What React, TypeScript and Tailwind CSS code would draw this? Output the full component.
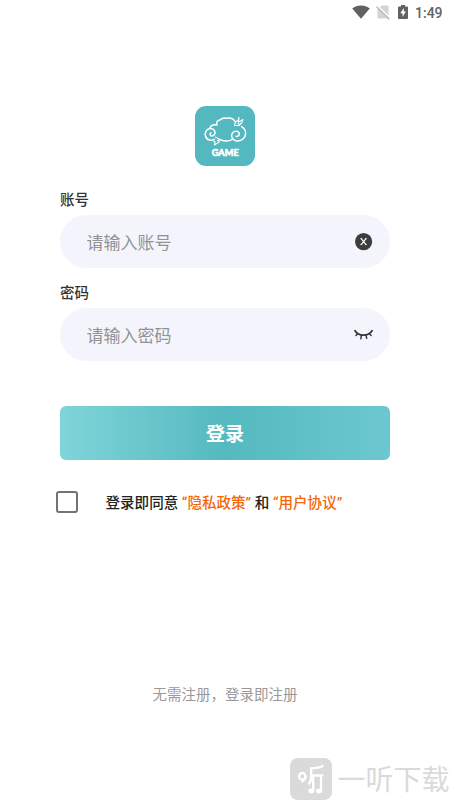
import React, { useState } from 'react';

function StatusBar() {
  return (
    <div className="flex h-6 shrink-0 items-center justify-end pr-2 text-[#616161]">
      <svg className="h-[14px] w-[18px]" viewBox="0 0 18 14" fill="currentColor">
        <path d="M0.2 3.4C2.6 1.5 5.6 0.5 9 0.5s6.400 1 8.800 2.900L9 13.700z" />
      </svg>
      <svg className="ml-[5px] h-4 w-4" viewBox="0 0 16 16">
        <path d="M6.500 1.500H12.500a1 1 0 0 1 1 1V14.500H2.500V5.500z" fill="#d3d3d3" />
        <path d="M1.800 2L15 15" stroke="#fff" strokeWidth="2.600" />
        <path d="M1.500 2.600L14.300 15.300" stroke="#aaa" strokeWidth="1.200" />
      </svg>
      <svg className="ml-[7px] h-4 w-[10px]" viewBox="0 0 10 16">
        <path d="M3 1h4v1.500h2q1 0 1 1V14q0 1-1 1H1q-1 0-1-1V3.500q0-1 1-1h2z" fill="currentColor" />
        <path d="M5.800 4L2.300 9.300h2.200v3.700L7.900 7.600H5.800z" fill="#fff" />
      </svg>
      <span className="ml-[7px] mt-px w-[27px] whitespace-nowrap font-[Roboto,sans-serif] text-[14px] font-medium leading-6">1:49</span>
    </div>
  );
}

function Logo() {
  return (
    <svg className="h-[60px] w-[60px]" viewBox="0 0 60 60">
      <rect width="60" height="60" rx="11" fill="#54b8c0" />
      <g fill="none" stroke="#fff" strokeWidth="1.500" strokeLinecap="round" strokeLinejoin="round">
        <path d="M16 27c-1.500 0.200-1.200 3 0.800 2.900 3-0.200 4.200-3.200 2.400-5.600-2-2.500-6-2.300-8 0.600-2.300 3.600-0.500 8.600 3.800 9.300 1.800 0.300 3.300-0.200 4.500-1" />
        <path d="M14.800 22.500c0.600-3 3.500-4.500 7.200-3.500-1.300-2.200 0.500-5 3-5 1.500-1.600 4.500-2.300 7-1.800 3.500-0.600 6.500 0.700 8 3.300" />
        <path d="M46.500 20.500c3.500 2 5 6 3.500 9.800-1.400 3.500-5.500 5.200-9.300 4.400-3.700-0.900-5.200-4.900-3.200-7.800 2-2.600 6.300-2.200 6.800 0.800 0.300 2-1.800 3.200-3.300 2.500" />
        <path d="M25.500 33.800c4.500 1.800 9 1.500 12.300-0.800" />
        <path d="M39.500 19.800c0.300-3 1.500-5 4.300-6l0.200-2.300M43.800 11.500l-0.500 4.700 4.700-2.700c-0.400 2.400-1.200 3.900-3.200 5.300l-1.800-1.300M40 19.500h4.500" strokeWidth="1.100" />
        <path d="M20.500 31l4.700 2.700-2.700 0.800 2 1.400-5 3 0.600-3.100-1.500-0.600" strokeWidth="1.100" />
      </g>
      <text x="30.200" y="49.500" textAnchor="middle" textLength="27" lengthAdjust="spacingAndGlyphs" fill="#fff" stroke="#fff" strokeWidth="0.600" strokeLinejoin="round" className="font-[Lato,sans-serif] text-[9px] font-bold">GAME</text>
    </svg>
  );
}

function ClearIcon() {
  return (
    <svg className="h-[18px] w-[18px]" viewBox="0 0 18 18">
      <circle cx="8.600" cy="8.600" r="8.600" fill="#3d3d3d" />
      <path d="M6.200 5.600l4.800 6M11 5.600l-4.800 6" stroke="#fff" strokeWidth="1.200" />
      <path d="M5.200 5.600h2M10 5.600h2M5.200 11.600h2M10 11.600h2" stroke="#fff" strokeWidth="0.700" />
    </svg>
  );
}

function ClosedEyeIcon() {
  return (
    <svg className="h-3 w-5" viewBox="0 0 20 12" fill="none" stroke="#333" strokeWidth="1.700" strokeLinecap="round">
      <path d="M2 1.700C5.500 7.500 15.500 7.500 19 1.700" />
      <path d="M4.500 4.800L3 6.500M8.400 6.300L7.800 9.800M13.100 6.300L13.700 9.400M16.500 4.800l1.600 1.600" strokeWidth="1.400" />
    </svg>
  );
}

interface FieldProps {
  label: string;
  type: string;
  placeholder: string;
  value: string;
  onChange: (value: string) => void;
  children: React.ReactNode;
}

function Field({ label, type, placeholder, value, onChange, children }: FieldProps) {
  return (
    <label className="block">
      <span className="block h-8 text-[14.500px] font-medium leading-8 text-[#333]">{label}</span>
      <span className="flex h-[53px] items-center rounded-full bg-[#f4f5fc] pl-[26.500px] pr-[17px]">
        <input
          type={type}
          value={value}
          placeholder={placeholder}
          onChange={(e) => onChange(e.target.value)}
          className="h-full min-w-0 flex-1 bg-transparent pb-px text-[17px] text-[#333] outline-none placeholder:text-[#929294]"
        />
        {children}
      </span>
    </label>
  );
}

function Watermark() {
  return (
    <div className="flex h-[42px] items-center text-[#dadada]">
      <svg className="h-[42px] w-[42px] shrink-0" viewBox="0 0 42 42">
        <rect width="42" height="42" rx="8" fill="currentColor" />
        <g fill="none" stroke="#fff" strokeWidth="2.300" strokeLinecap="round" strokeLinejoin="round">
          <circle cx="12.300" cy="18.300" r="3.300" />
          <path d="M15.400 19.300c-0.400 2-1.400 3.200-3 4.200" />
          <path d="M32.500 8c-3 2-7 2.200-11.300 2.200V19c0 2.500-0.500 4.500-2 6.500" />
          <path d="M21.500 17.500h11M23.200 18v14.500M31 18v14.500" />
        </g>
        <ellipse cx="21.300" cy="33" rx="3" ry="2.400" fill="#fff" />
        <ellipse cx="29.100" cy="33" rx="3" ry="2.400" fill="#fff" />
      </svg>
      <span className="-mt-[2px] ml-[5.500px] whitespace-nowrap text-[28px] leading-[42px]">一听下载</span>
    </div>
  );
}

export default function App() {
  const [account, setAccount] = useState('');
  const [password, setPassword] = useState('');
  const [agreed, setAgreed] = useState(false);

  return (
    <div className="flex h-[800px] w-[450px] flex-col overflow-hidden bg-white font-['Noto_Sans_CJK_SC',sans-serif]">
      <StatusBar />
      <div className="mt-[82px] flex justify-center">
        <Logo />
      </div>

      <div className="mt-[17px] flex flex-col gap-2 px-[60px]">
        <Field label="账号" type="text" placeholder="请输入账号" value={account} onChange={setAccount}>
          <button type="button" onClick={() => setAccount('')}>
            <ClearIcon />
          </button>
        </Field>
        <Field label="密码" type="password" placeholder="请输入密码" value={password} onChange={setPassword}>
          <ClosedEyeIcon />
        </Field>
      </div>

      <button
        type="button"
        className="mx-[60px] mt-[45px] h-[54px] shrink-0 rounded-md bg-linear-to-r from-[#7fd5d9] via-[#54b9c0] to-[#6cc8d0] text-[19px] font-bold text-white"
      >
        登录
      </button>

      <div className="mt-[31px] flex h-[22px] items-center pl-[56px]">
        <button
          type="button"
          onClick={() => setAgreed(!agreed)}
          className={agreed ? 'h-[22px] w-[22px] rounded-[3px] border-2 border-[#737373] bg-[#54b9c0]' : 'h-[22px] w-[22px] rounded-[3px] border-2 border-[#737373]'}
        />
        <p className="ml-[27.500px] mt-[3px] whitespace-nowrap font-[Roboto,'Noto_Sans_CJK_SC',sans-serif] text-[14.550px] font-medium text-[#222]">
          登录即同意 <span className="text-[#f5670a]">“隐私政策”</span> 和 <span className="text-[#f5670a]">“用户协议”</span>
        </p>
      </div>

      <p className="mt-[170px] text-center text-[14.500px] leading-[22px] text-[#999]">无需注册，登录即注册</p>

      <div className="mt-[53px] flex pl-[290px]">
        <Watermark />
      </div>
    </div>
  );
}
